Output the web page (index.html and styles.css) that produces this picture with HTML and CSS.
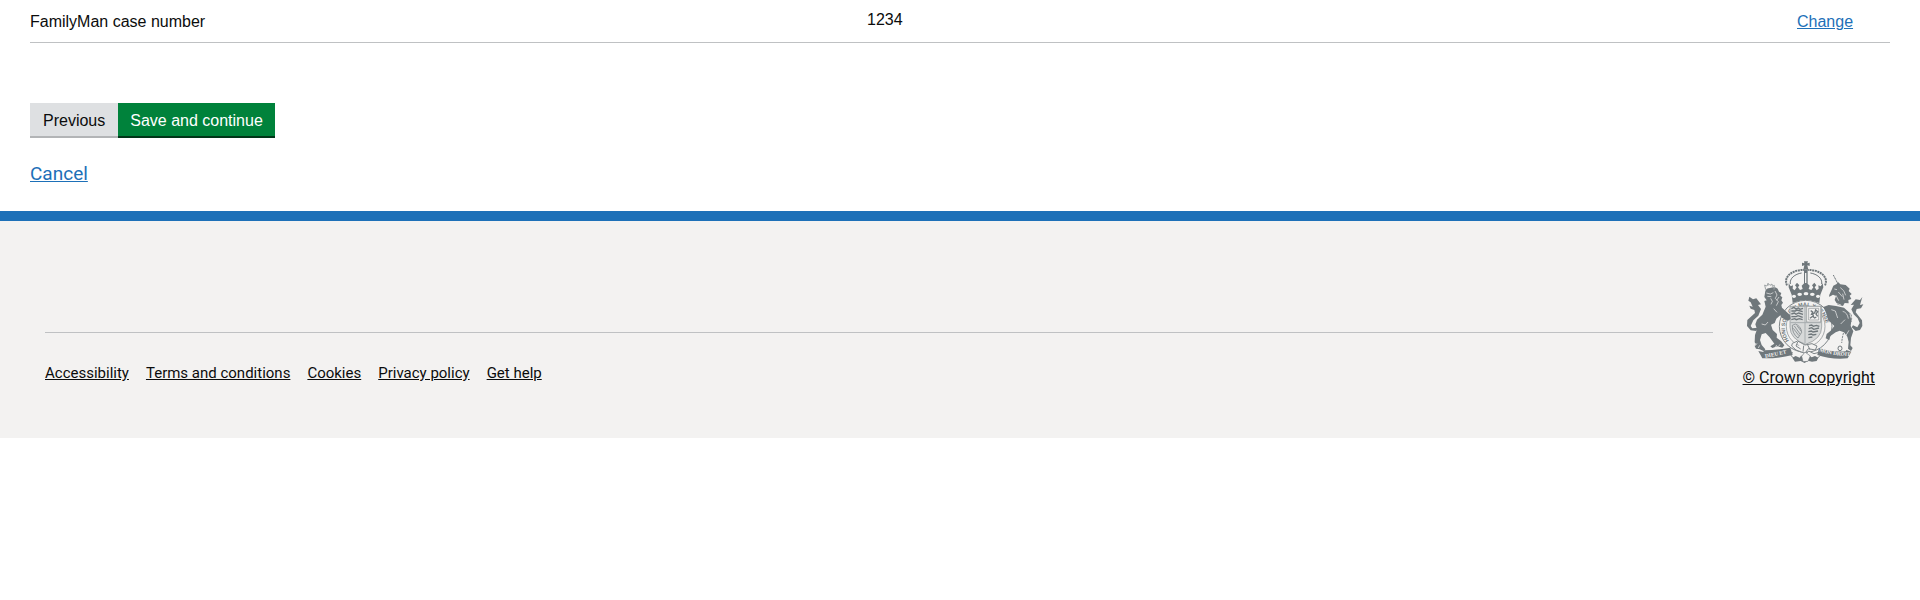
FILE: index.html
```html
<!DOCTYPE html>
<html lang="en">
<head>
<meta charset="utf-8">
<meta name="viewport" content="width=device-width, initial-scale=1">
<title>Check your answers</title>
<link rel="stylesheet" href="styles.css">
</head>
<body>
<main class="page">
  <table class="answers">
    <tbody>
      <tr>
        <th class="answers-key" scope="row">FamilyMan case number</th>
        <td class="answers-value">1234</td>
        <td class="answers-action"><a class="link" href="#">Change</a></td>
      </tr>
    </tbody>
  </table>
  <form class="form">
    <div class="buttons">
      <button class="button button-secondary" type="button">Previous</button>
      <button class="button" type="submit">Save and continue</button>
    </div>
    <p class="cancel"><a class="link" href="#">Cancel</a></p>
  </form>
</main>
<footer class="footer">
  <div class="footer-main">
    <hr class="footer-rule">
    <ul class="footer-links">
      <li><a class="footer-link" href="#">Accessibility</a></li>
      <li><a class="footer-link" href="#">Terms and conditions</a></li>
      <li><a class="footer-link" href="#">Cookies</a></li>
      <li><a class="footer-link" href="#">Privacy policy</a></li>
      <li><a class="footer-link" href="#">Get help</a></li>
    </ul>
  </div>
  <a class="copyright" href="#">
    <svg class="crest" viewBox="128 62 375 306" aria-hidden="true">
      <defs>
        <path id="motto-left" d="M195 352Q234 346 275 335"/>
        <path id="motto-right" d="M356 333Q396 346 446 347"/>
        <path id="garter-arc" d="M266 301A62 65 0 1 1 366 301"/>
      </defs>
      <!-- crown -->
      <g fill="#6f777b">
        <path d="M311 63h12l-2 6 7-2v10l-7-2 3 13h-15l3-13-7 2V67l7 2z"/>
        <path d="M311 88h11v42h-11z"/>
        <path d="M265 129l6 9 7-3-1 10 6 5 6-9-5-6 6-8 7 8-4 6 6 8 8-3-3-10 12-12 12 12-3 10 8 3 6-8-4-6 7-8 6 8-5 6 6 9 6-5-1-10 7 3 6-9 2 12-9 22-3 25q-41-16-80 0l-3-25-9-22z"/>
      </g>
      <g fill="none" stroke="#6f777b">
        <path d="M260 135c-13-28 21-48 52-46M374 135c13-28-21-48-52-46" stroke-width="6" stroke-dasharray="6 2"/>
        <path d="M270 131c-3-17 14-30 34-33M364 131c3-17-14-30-34-33" stroke-width="3"/>
      </g>
      <path d="M316 98v30" stroke="#f3f2f1" stroke-width="4"/>
      <g fill="#f3f2f1"><ellipse cx="281" cy="168" rx="6" ry="5"/><ellipse cx="298" cy="162" rx="7" ry="5"/><ellipse cx="317" cy="160" rx="7" ry="5"/><ellipse cx="336" cy="162" rx="7" ry="5"/><ellipse cx="353" cy="168" rx="6" ry="5"/></g>
      <!-- garter -->
      <ellipse cx="316" cy="258" rx="79" ry="78" fill="#f3f2f1" stroke="#7e8588" stroke-width="3"/>
      <ellipse cx="316" cy="258" rx="58" ry="61" fill="#f3f2f1" stroke="#7e8588" stroke-width="2"/>
      <text class="garter-text"><textPath href="#garter-arc">HONI SOIT QUI MAL Y PENSE</textPath></text>
      <!-- shield -->
      <path d="M269 198h95v62q0 36-48 52-47-16-47-52z" fill="#d7d9d9" stroke="#899092" stroke-width="2"/>
      <path d="M319 198h42v47h-42z" fill="#f3f2f1" stroke="#899092" stroke-width="2"/>
      <path d="M325 204h30v35h-30z" fill="none" stroke="#899092" stroke-width="2"/>
      <g fill="none" stroke="#6f777b" stroke-width="4">
        <path d="M273 205l8-4 5 5 8-3 5 4 9-3M273 212h12l5-3 17 5M273 221l9-3 5 4 8-4 13 4M273 229h14l6-3 14 5M273 238l10-3 5 3 9-3 10 3M326 256l8-2 5 4 9-3 9 3M325 265l9-3 6 5 16-4M324 274l9-2 5 3 15-3M324 283l9-2 5 3 10-2M324 292l12-2"/>
        <path d="M331 211l6 4-3 6 9-3 3-9 6 5-5 7 5 7M329 234l8-6 6 5 5-3M337 220l3 10"/>
        <path d="M276 255q-1 25 17 38l11-17q-2-19-19-25zM282 257l17 24M279 264l17 22M290 256l12 16" stroke-width="2"/>
      </g>
      <path d="M314 199v110M270 247h92" stroke="#a7adaf" stroke-width="3"/>
      <!-- lion -->
      <g fill="#6f777b">
        <path d="M195 152q3-9 14-9 14-5 23 2l4 9 7 4-3 8 6 5-3 9 5 7-5 7 2 8 24 22 2 12-8 5-19-9-4-7-12 10-5 13-11 5 5 16 13 12-1 11 13 10 10 13-6 7-15-4-15 5-6-5 12-8-14-19-12-13-12 4-5 17 5 15 11 13-4 6-13-6-11-2-4-8 4-6-4-5 1-22 6-17-5-15 5-14 16-15 10-24-4-17 7-2-7-10z"/>
        <path d="M147 169l11 8 10-3 14 18-9 2 9 12-8 20-15 14-8 17 5 7 17-2-5 10-17-2-11-13 1-18 23-21-2-9-11-4-4-9 10 3-6-13-7-5z"/>
      </g>
      <path d="M196 148l-3-14 6 3 5-7 5 5 6-4 1 7 6-3-1 13M203 128v8" fill="none" stroke="#9ba1a3" stroke-width="3"/>
      <g fill="none" stroke="#f3f2f1" stroke-width="2">
        <path d="M198 158l12 3 9-4M201 168l12 1M224 152l6 12-5 10 9 10-6 12M211 174l5 9-4 9M236 170l-7 10M220 205l10 11M184 251l11 3 8-9"/>
        <path d="M165 316l5-7M174 323l4-8M224 323l5-9M235 318l4-6"/>
      </g>
      <!-- unicorn -->
      <g fill="#6f777b">
        <path d="M387 163l7-15 5-12 10-5 4-6 7 7 16 2 12 11-3 7 9 9-6 5 5 10-9 3 1 10-12-1-5 9-16-4-9-14 4-12-9-4-8 5-4 1z"/>
        <path d="M369 200l16-6 22 3 24 5 15 14 7 22-2 19 8 16-7 20-2 22 7 8-5 9-9-7 2-20-4-16-10-13-13-5-12 5-17 12-2 11-11-5 3-13 12-10 11-14-18-17-7-23z"/>
        <path d="M486 170l-7 9-13-2-15 17 10-1-8 14 7 15 12 12 6 14-7 13-13-6-4 6 12 11 13-3 7-12-1-17-19-24 3-10 13-2 7-12-10 2z"/>
      </g>
      <g fill="none" stroke="#6f777b" stroke-width="3">
        <path d="M399 104l13 25" stroke-dasharray="4 1"/>
        <path d="M437 224q14-12 16 3 4 20-12 31-13 10-17 50" stroke-dasharray="6 3"/>
        <ellipse cx="419" cy="324" rx="6" ry="7"/>
      </g>
      <g fill="none" stroke="#f3f2f1" stroke-width="2">
        <path d="M402 146l8 2M420 142l10 9 6 14M414 155l12 14M393 208l12 4 7 21M427 213q14 3 17 22M434 238l-13 13M446 270l-12 20M407 165l8 16M427 160l4 18M392 184l30 10"/>
      </g>
      <!-- motto ribbon and buckle -->
      <path d="M276 309l16-7 22 12 21-4 15 7-5 12-21-4-10 14-27-10-13-12zM292 305l-5 12 14 9M310 316l-2 18M322 314l7 14M319 339l6-7 16 8 15-4M276 335l-4 11 8 7M353 336l7 9-8 8" fill="#f3f2f1" stroke="#7e8588" stroke-width="3"/>
      <g fill="#6f777b">
        <path d="M174 332l15 3 2-5q39 0 79-8l7 22q-42 11-91 10z"/>
        <path d="M356 323q37 13 80 10l2-4 15 5-11 20q-51 4-91-10z"/>
        <path d="M276 352l10-5 12 5 4-6 12 1 13-1 7 5 10-4 10 5-5 10-14 2-12-3-10 7-12-6-17 2z"/>
      </g>
      <path d="M304 348l10-13 16 12-7 16-15 1z" fill="#f3f2f1" stroke="#6f777b" stroke-width="2"/>
      <text class="motto-text"><textPath href="#motto-left">DIEU ET</textPath></text>
      <text class="motto-text"><textPath href="#motto-right">MON DROIT</textPath></text>
    </svg>
    <span>© Crown copyright</span>
  </a>
</footer>
</body>
</html>
```
FILE: styles.css
```css
body {
  margin: 0;
  background: #fff;
  color: #0b0c0c;
  font: 16px/20px "Liberation Sans", Arial, sans-serif;
}
.page { padding: 0 30px; }
.answers {
  width: 100%;
  table-layout: fixed;
  border-collapse: separate;
  border-spacing: 0;
}
.answers th,
.answers td {
  padding: 11px 0 10px;
  border-bottom: 1px solid #bfc1c3;
  text-align: left;
  vertical-align: top;
  font-weight: normal;
  line-height: 21px;
}
.answers .answers-key { width: 45%; }
.answers .answers-value { width: 50%; line-height: 18px; }
.answers .answers-action { width: 5%; }
.link { color: #1d70b8; }
.form { padding-top: 60px; }
.buttons { display: flex; }
.button {
  margin: 0;
  padding: 9px 12px 6px;
  border: 0;
  border-radius: 0;
  background: #00823b;
  box-shadow: 0 2px 0 #003618;
  color: #fff;
  font: inherit;
  line-height: 18px;
}
.button-secondary {
  padding-right: 13px;
  padding-left: 13px;
  background: #dee0e2;
  box-shadow: 0 2px 0 #b2b4b6;
  color: #0b0c0c;
}
.cancel {
  margin: 0;
  padding: 25px 0;
  font: 19px/25px Roboto, sans-serif;
}
.footer {
  display: flex;
  gap: 30px;
  padding: 40px 45px 50px;
  border-top: 10px solid #1d70b8;
  background: #f3f2f1;
  font: 16px/20px Roboto, sans-serif;
}
.footer-main { flex: 1; padding-top: 71px; }
.footer-rule {
  height: 1px;
  margin: 0 0 30px;
  border: 0;
  background: #bfc1c3;
}
.footer-links {
  display: flex;
  flex-wrap: wrap;
  gap: 17px;
  margin: 0;
  padding: 0;
  list-style: none;
  font-size: 15px;
}
.footer-link,
.copyright { color: #0b0c0c; }
.copyright {
  display: flex;
  flex-direction: column;
  align-items: flex-start;
  gap: 5px;
}
.crest { display: block; width: 125px; height: 102px; }
.garter-text { fill: #6f777b; font: bold 16px "Liberation Sans", sans-serif; }
.motto-text { fill: #f3f2f1; font: bold 16px "Liberation Serif", serif; }
```
